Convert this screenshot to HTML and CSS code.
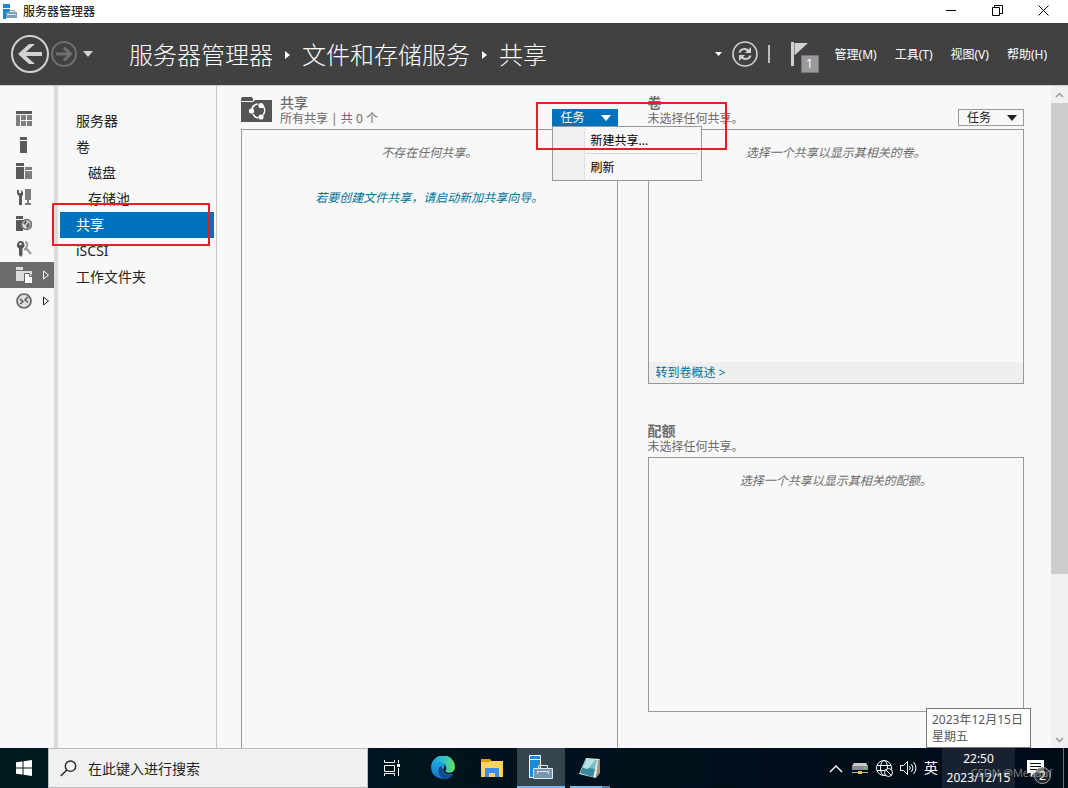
FILE: index.html
```html
<!DOCTYPE html>
<html lang="zh-CN">
<head>
<meta charset="utf-8">
<meta name="viewport" content="width=device-width, initial-scale=1">
<title>服务器管理器</title>
<link rel="stylesheet" href="styles.css">
</head>
<body>
<div class="desktop">
  <div class="titlebar">
    <svg class="app-icon" width="15" height="15" viewBox="0 0 15 15"><path fill="#1b87d3" d="M0 0h7v4H0zM0 5h7v2L3 10v5H0z"/><path fill="#7d9fb8" d="M3 8h11v6H3z"/><path stroke="#7d9fb8" fill="none" d="M6.500 8V6.500h5V8"/><path stroke="#dce9f2" fill="none" d="M4 10.500h9"/></svg>
    <span class="window-title">服务器管理器</span>
    <div class="window-controls">
      <button class="window-button" aria-label="最小化"><svg width="11" height="11"><path stroke="#000" d="M0 5.500h10"/></svg></button>
      <button class="window-button" aria-label="还原"><svg width="11" height="11" fill="none" stroke="#000"><path d="M.5 2.500h7v8h-7zM2.500 2.500v-2h8v8h-3"/></svg></button>
      <button class="window-button" aria-label="关闭"><svg width="11" height="11" stroke="#000"><path d="M.5.500l10 10M10.500.500l-10 10"/></svg></button>
    </div>
  </div>

  <header class="header">
    <div class="history">
      <button class="plain" aria-label="后退"><svg width="38" height="38" viewBox="0 0 38 38"><circle cx="19" cy="19" r="18" fill="none" stroke="#d2d2d2" stroke-width="2"/><path fill="#d2d2d2" d="M7 19 18 9h6l-9 8h16v4H15l9 8h-6z"/></svg></button>
      <button class="plain" aria-label="前进"><svg width="26" height="26" viewBox="0 0 26 26" fill="none" stroke="#6f6f6f"><circle cx="13" cy="13" r="12" stroke-width="2"/><path stroke-width="3" d="M5 13h14M13 6.500l6.500 6.500-6.500 6.500"/></svg></button>
      <button class="plain" aria-label="历史记录"><svg width="10" height="6"><path fill="#d2d2d2" d="M0 0h10L5 6z"/></svg></button>
    </div>
    <nav class="breadcrumb" aria-label="路径">
      <a href="#">服务器管理器</a>
      <svg width="5" height="8"><path fill="#fff" d="M0 0l5 4-5 4z"/></svg>
      <a href="#">文件和存储服务</a>
      <svg width="5" height="8"><path fill="#fff" d="M0 0l5 4-5 4z"/></svg>
      <a href="#">共享</a>
    </nav>
    <div class="header-tools">
      <button class="plain" aria-label="更多"><svg width="7" height="4"><path fill="#fff" d="M0 0h7L3.500 4z"/></svg></button>
      <button class="plain" aria-label="刷新"><svg width="26" height="26" viewBox="0 0 26 26" fill="none" stroke="#d2d2d2"><circle cx="13" cy="13" r="12" stroke-width="1.600"/><path stroke-width="2" d="M7.500 11.500c1-3.500 6-5 9-1.500M18.500 14.500c-1 3.500-6 5-9 1.500"/><path fill="#d2d2d2" stroke="none" d="M19 6v6h-6l2-2zM7 20v-6h6l-2 2z"/></svg></button>
      <span class="tool-divider"></span>
      <button class="plain flag" aria-label="通知"><svg width="18" height="25"><path fill="#d2d2d2" d="M0 0h3v24H0zM4 1h13L4 13z"/><path stroke="#8a8a8a" d="M3.500 1v12"/></svg><span class="flag-count">1</span></button>
    </div>
    <div class="menus">
      <button class="plain menu">管理(M)</button>
      <button class="plain menu">工具(T)</button>
      <button class="plain menu">视图(V)</button>
      <button class="plain menu">帮助(H)</button>
    </div>
  </header>

  <div class="main">
    <nav class="rail" aria-label="服务器角色">
      <a class="rail-item" href="#" aria-label="仪表板"><svg width="16" height="16"><path fill="#595959" d="M0 0h16v3H0z"/><path fill="#7d7d7d" d="M0 4h4v11H0zM5 4h5v5H5zM11 4h5v5h-5zM5 10h5v5H5zM11 10h5v5h-5z"/></svg></a>
      <a class="rail-item" href="#" aria-label="本地服务器"><svg width="16" height="16"><path fill="#595959" d="M4 0h7v3H4zM4 4h7v12H4z"/></svg></a>
      <a class="rail-item" href="#" aria-label="所有服务器"><svg width="16" height="16"><path fill="#595959" d="M0 0h8v3H0zM0 4h8v12H0z"/><path fill="#7d7d7d" d="M9 4h7v3H9zM9 8h7v8H9z"/></svg></a>
      <a class="rail-item" href="#" aria-label="服务工具"><svg width="16" height="16"><path fill="#595959" d="M1 1h2v3h2V1l2 2v3L6 7v9H3V7L1 5z"/><path fill="#7d7d7d" d="M9 0h6v11H9zM11 11h2v3h2v2H9v-2h2z"/></svg></a>
      <a class="rail-item" href="#" aria-label="网络服务"><svg width="16" height="16"><path fill="#595959" d="M0 1h7v3H0zM0 5h7v11H0z"/><circle cx="10.500" cy="9.500" r="5" fill="#ddd" stroke="#6b6b6b" stroke-width="1.500"/><path fill="#666" d="M7 8l3-3 1 2-2 3zM10 10l3-3 1 4-3 3z"/></svg></a>
      <a class="rail-item" href="#" aria-label="证书服务"><svg width="16" height="16"><path fill="#595959" fill-rule="evenodd" d="M4.500 0a4 4 0 0 1 2 7.500V14L5 16l-2-2V7.500A4 4 0 0 1 4.500 0zm-1 2v2h2V2z"/><path stroke="#999" stroke-width="2" fill="none" d="M9 1q3 0 2 4l-1 2 5 6M8 8l4 1"/></svg></a>
      <a class="rail-item rail-current" href="#" aria-label="文件和存储服务"><svg width="17" height="17"><path fill="#ddd" d="M0 0h7v3H0zM0 4h16v10H0z"/><path fill="#fff" stroke="#666" d="M8.500 6.500h5l3 3v7h-8z"/><path fill="none" stroke="#777" d="M13.500 6.500v3h3"/></svg><svg class="rail-arrow" width="7" height="10"><path fill="none" stroke="#fff" d="M.5 1l5 4-5 4z"/></svg></a>
      <a class="rail-item" href="#" aria-label="远程桌面服务"><svg width="16" height="16"><circle cx="8" cy="8" r="7" fill="#ddd" stroke="#666" stroke-width="1.700"/><path stroke="#555" stroke-width="1.400" fill="none" d="M4 6l3 2.500L4 11M12 4L9 7l3 2.500"/></svg><svg class="rail-arrow" width="7" height="10"><path fill="none" stroke="#222" d="M.5 1l5 4-5 4z"/></svg></a>
    </nav>

    <nav class="sidebar" aria-label="文件和存储服务">
      <a class="nav-item" href="#">服务器</a>
      <a class="nav-item" href="#">卷</a>
      <a class="nav-item nav-sub" href="#">磁盘</a>
      <a class="nav-item nav-sub" href="#">存储池</a>
      <a class="nav-item nav-current" href="#">共享<span class="mark mark-nav"></span></a>
      <a class="nav-item" href="#">iSCSI</a>
      <a class="nav-item" href="#">工作文件夹</a>
    </nav>

    <main class="content">
      <section class="tile">
        <div class="tile-head">
          <svg class="tile-icon" width="31" height="25"><path fill="#555" d="M1 0h10l1 2v2H0V2zM0 5h12l2-2h17v22H0z"/><g fill="none" stroke="#fff" stroke-width="1.600"><path d="M11 12a7 7 0 0 1 6-5M22 9a7 7 0 0 1 0 9M17 21a7 7 0 0 1-5-4"/></g><g fill="#fff"><circle cx="20" cy="8.500" r="2.600"/><circle cx="10.500" cy="14" r="2.600"/><circle cx="20" cy="20" r="2.600"/></g></svg>
          <div class="tile-text">
            <h2 class="tile-title tile-title-light">共享</h2>
            <p class="tile-subtitle">所有共享 | 共 0 个</p>
          </div>
          <div class="tasks">
            <button class="task-button task-open" aria-expanded="true">任务<svg width="10" height="6"><path fill="#fff" d="M0 0h10L5 6z"/></svg></button>
            <div class="task-menu">
              <button class="task-item">新建共享...</button>
              <button class="task-item task-item-split">刷新</button>
            </div>
            <span class="mark mark-task"></span>
          </div>
        </div>
        <div class="box box-open">
          <p class="empty">不存在任何共享。</p>
          <a class="empty empty-link" href="#">若要创建文件共享，请启动新加共享向导。</a>
        </div>
      </section>

      <div class="column">
        <section class="tile">
          <div class="tile-head">
            <div class="tile-text">
              <h2 class="tile-title">卷</h2>
              <p class="tile-subtitle">未选择任何共享。</p>
            </div>
            <div class="tasks">
              <button class="task-button">任务<svg width="10" height="6"><path fill="#222" d="M0 0h10L5 6z"/></svg></button>
            </div>
          </div>
          <div class="box">
            <p class="empty">选择一个共享以显示其相关的卷。</p>
            <div class="box-foot"><a href="#">转到卷概述 &gt;</a></div>
          </div>
        </section>
        <section class="tile">
          <div class="tile-head">
            <div class="tile-text">
              <h2 class="tile-title">配额</h2>
              <p class="tile-subtitle">未选择任何共享。</p>
            </div>
          </div>
          <div class="box">
            <p class="empty">选择一个共享以显示其相关的配额。</p>
          </div>
        </section>
      </div>
    </main>

    <div class="scrollbar" aria-hidden="true">
      <span class="scroll-arrow"><svg width="9" height="6"><path fill="none" stroke="#999" stroke-width="1.500" d="M1 5l3.500-3.500L8 5"/></svg></span>
      <div class="scroll-track"><div class="scroll-thumb"></div></div>
      <span class="scroll-arrow"><svg width="9" height="6"><path fill="none" stroke="#999" stroke-width="1.500" d="M1 1l3.500 3.500L8 1"/></svg></span>
    </div>
  </div>

  <footer class="taskbar">
    <button class="task-app" aria-label="开始"><svg width="16" height="16"><path fill="#fff" d="M0 2.300l6.500-.9v6.100H0zM7.500 1.200L16 0v7.500H7.500zM0 8.500h6.500v6.100L0 13.700zM7.500 8.500H16V16l-8.500-1.200z"/></svg></button>
    <label class="search">
      <svg width="17" height="17" fill="none" stroke="#222" stroke-width="1.400"><circle cx="10.500" cy="6.200" r="5.200"/><path d="M6.800 10L.8 16"/></svg>
      <input class="search-input" type="text" placeholder="在此键入进行搜索" aria-label="搜索">
    </label>
    <div class="apps">
      <button class="task-app" aria-label="任务视图"><svg width="17" height="16" fill="none" stroke="#fff"><path d="M.5 0v2.500h10V0M.5 5.500h10v6H.5zM.5 16v-2.500h10V16M14.500 0v3M14.500 8v8"/><path fill="#fff" stroke="none" d="M13 4h3v3h-3z"/></svg></button>
      <button class="task-app" aria-label="Microsoft Edge"><svg width="24" height="24" viewBox="0 0 24 24"><defs><linearGradient id="e1" x2="1"><stop stop-color="#1b9de2"/><stop offset=".6" stop-color="#32c5c0"/><stop offset="1" stop-color="#6be057"/></linearGradient><linearGradient id="e2" y2="1" x2="0"><stop stop-color="#1ba6e4"/><stop offset="1" stop-color="#1672c8"/></linearGradient></defs><path fill="url(#e2)" d="M0 12C1 6 6 5 10 6.500c4 1.500 4 4 3 5.500-2 3 0 7 8.500 6A12 12 0 0 1 0 12z"/><path fill="#114a8b" d="M9.500 10c-4 3-2 12 4.500 13.500 4 0 7-3 8.500-6-4 2.500-12 1.500-10.500-4z"/><path fill="url(#e1)" d="M0 11.500A12 12 0 0 1 24 11c0 5-4.500 6.500-8 5.500-2-.6-2-1.500-1.200-2.500 1.600-2.500-.8-7.500-6.800-7.500-4 0-7 2.500-8 5z"/></svg></button>
      <button class="task-app" aria-label="文件资源管理器"><svg width="22" height="18"><path fill="#e0a000" d="M0 0h9l1.500 2H22v4H0z"/><path fill="#ffd45e" d="M0 3h8l2-1h12v16H0z"/><path fill="#3c8fdc" d="M4 10l1-1h12l1 1v8h-4v-4H8v4H4z"/></svg></button>
      <button class="task-app app-active" aria-label="服务器管理器"><svg width="24" height="25"><path fill="#168bdc" stroke="#fff" d="M.5.500h11v4H.5zM.5 4.500h11v18H.5z"/><path fill="#7796ad" stroke="#dce9f2" d="M4.500 13.500h19v10h-19z"/><path fill="none" stroke="#dce9f2" d="M9.500 13v-2.500h9V13M7.500 15.500l1 1h11l1-1M8.500 17v2M19.500 17v2"/></svg></button>
      <button class="task-app app-running" aria-label="记事本"><svg width="24" height="24"><path fill="#e8eced" d="M8 2l14 1-4 19L1 18z"/><path fill="#79bfc9" d="M8 3l11 1-4 17L2 17z"/><path fill="#338b9b" d="M5 11l12 2-2 8-13-4z"/><path fill="#b9e2e6" d="M9 3l8 1-7 9-5-1z"/><path fill="#a89276" d="M20 4l2-1v14l-4 5z"/></svg></button>
    </div>
    <div class="tray">
      <button class="tray-button" aria-label="显示隐藏的图标"><svg width="14" height="9"><path fill="none" stroke="#fff" stroke-width="1.400" d="M1 8l6-6 6 6"/></svg></button>
      <button class="tray-button" aria-label="磁盘"><svg width="16" height="13"><path fill="#ccc" d="M2 1h12l2 3H0z"/><path fill="#8c8c8c" d="M0 4h16v4H0z"/><path fill="#5bd15b" d="M12 5h2v2h-2z"/><path fill="#bbb" d="M0 10h16v1H0z"/><path fill="#e2c542" d="M6 9h4v3H6z"/></svg></button>
      <button class="tray-button" aria-label="网络"><svg width="17" height="17" fill="none" stroke="#fff"><circle cx="8" cy="8" r="7.500"/><ellipse cx="8" cy="8" rx="3.500" ry="7.500"/><path d="M1 5.500h14M1 10.500h8"/><circle cx="12.500" cy="12.500" r="4" fill="#000b14"/><path d="M9.800 9.800l5.400 5.400"/></svg></button>
      <button class="tray-button" aria-label="音量"><svg width="17" height="14" fill="none" stroke="#fff"><path d="M.5 4.500h3l4-4v13l-4-4h-3zM9.500 5q1.500 2 0 4M11.500 3q3 4 0 8M13.500 1q5 6 0 12"/></svg></button>
      <button class="tray-button ime" aria-label="输入法">英</button>
      <button class="clock"><span>22:50</span><span>2023/12/15</span><span class="clock-tip"><span>2023年12月15日</span><span>星期五</span></span></button>
      <button class="notify" aria-label="操作中心"><svg width="17" height="17"><path fill="#fff" d="M0 0h17v13H7l-3 4v-4H0z"/><path stroke="#000b14" d="M3 3.500h11M3 6.500h11M3 9.500h8"/></svg><span class="notify-count">2</span></button>
      <span class="show-desktop"></span>
      <span class="watermark">CSDN @Meaauf</span>
    </div>
  </footer>
</div>
</body>
</html>
```
FILE: styles.css
```css
* {
  box-sizing: border-box;
}

body {
  margin: 0;
  font-family: "Noto Sans", "Noto Sans CJK SC", sans-serif;
  font-size: 12px;
  line-height: 16px;
  color: #222;
}

button {
  font: inherit;
  color: inherit;
  background: none;
  border: 0;
  padding: 0;
}

a {
  color: inherit;
  text-decoration: none;
}

p,
h2 {
  margin: 0;
}

svg {
  display: block;
  flex: none;
}

.desktop {
  display: flex;
  flex-direction: column;
  height: 100vh;
  overflow: hidden;
  background: #f8f8f8;
}

/* Window frame */
.titlebar {
  display: flex;
  align-items: center;
  height: 23px;
  padding-left: 3px;
  background: #fff;
  color: #000;
}

.window-title {
  margin-left: 5px;
}

.window-controls {
  display: flex;
  margin-left: auto;
  margin-bottom: 3px;
  padding-right: 2px;
}

.window-button {
  display: grid;
  place-items: center;
  width: 46px;
  height: 20px;
}

/* Dark header */
.header {
  display: flex;
  align-items: center;
  height: 62px;
  padding: 0 21px 0 11px;
  background: #414141;
  color: #fff;
}

.history {
  display: flex;
  align-items: center;
  gap: 2px;
}

.history .plain:last-child {
  padding-left: 4px;
}

.breadcrumb {
  display: flex;
  align-items: center;
  gap: 12px;
  margin-left: 36px;
  padding-top: 2px;
  font-size: 24px;
  font-weight: 300;
  line-height: 32px;
  white-space: nowrap;
}

.header-tools {
  display: flex;
  align-items: center;
  gap: 10px;
  margin-left: auto;
}

.tool-divider {
  width: 2px;
  height: 18px;
  background: #bdbdbd;
}

.flag {
  position: relative;
  width: 28px;
  height: 30px;
  margin-left: 11px;
}

.flag-count {
  position: absolute;
  right: 0;
  bottom: -4px;
  width: 18px;
  height: 18px;
  border: 1px solid #777;
  background: #9b999c;
  font-size: 12px;
  line-height: 16px;
  text-align: center;
}

.menus {
  display: flex;
  gap: 18px;
  margin-left: 16px;
  padding-top: 2px;
  white-space: nowrap;
}

/* Body */
.main {
  display: flex;
  flex: 1;
  min-height: 0;
  border-top: 1px solid #d0d0d0;
}

.rail {
  width: 58px;
  padding-top: 20px;
  border-right: 4px solid #dcdcdc;
}

.rail-item {
  display: flex;
  align-items: center;
  gap: 10px;
  height: 26px;
  padding-left: 16px;
}

.rail-current {
  background: #6b6b6b;
}

.rail-arrow {
  margin-left: auto;
  margin-right: 4px;
}

.sidebar {
  width: 159px;
  padding: 22px 2px 0;
  border-right: 1px solid #c4c4c4;
  font-size: 14px;
  line-height: 26px;
}

.nav-item {
  display: block;
  height: 26px;
  padding-left: 16px;
}

.nav-sub {
  padding-left: 28px;
}

.nav-current {
  position: relative;
  background: #0072bc;
  color: #fff;
}

.mark {
  position: absolute;
  z-index: 3;
  border: 2px solid #ed1c24;
  pointer-events: none;
}

.mark-nav {
  left: -8px;
  top: -9px;
  width: 158px;
  height: 43px;
}

.mark-task {
  left: -16px;
  top: -7px;
  width: 191px;
  height: 48px;
}

.content {
  display: grid;
  grid-template-columns: 1fr 1fr;
  gap: 30px;
  flex: 1;
  min-width: 0;
  min-height: 0;
  padding: 8px 27px 0 24px;
  color: #6b6b6b;
}

.column {
  display: flex;
  flex-direction: column;
  gap: 38px;
}

.tile {
  display: flex;
  flex-direction: column;
}

.tile-head {
  display: flex;
  height: 35px;
}

.tile-icon {
  margin: 3px 8px 0 0;
}

.tile-title {
  font-size: 14px;
  font-weight: 700;
  line-height: 17px;
}

.tile-title-light {
  font-weight: 500;
}

.tasks {
  position: relative;
  align-self: flex-end;
  margin: 0 0 3px auto;
}

.task-button {
  display: flex;
  align-items: center;
  justify-content: space-between;
  width: 66px;
  height: 17px;
  padding: 0 6px 0 8px;
  border: 1px solid #999;
  color: #222;
}

.task-open {
  border-color: #0072bc;
  background: #0072bc;
  color: #fff;
}

.task-menu {
  position: absolute;
  z-index: 2;
  left: 0;
  top: 17px;
  width: 150px;
  padding: 1px 3px 0;
  border: 1px solid #999;
  background: linear-gradient(90deg, #f0f0f0 31px, #e0e0e0 31px, #e0e0e0 32px, #f7f7f7 32px);
  color: #000;
}

.task-item {
  display: block;
  width: 100%;
  height: 25px;
  padding-left: 35px;
  text-align: left;
}

.task-item-split {
  height: 27px;
  padding-top: 2px;
  background: linear-gradient(#d5d5d5, #d5d5d5) right top / 112px 1px no-repeat;
}

.box {
  display: flex;
  flex-direction: column;
  align-items: center;
  min-height: 255px;
  padding-top: 15px;
  border: 1px solid #999;
}

.box-open {
  flex: 1;
  border-bottom: 0;
}

.empty {
  font-style: italic;
}

.empty-link {
  margin-top: 29px;
  color: #007299;
}

.box-foot {
  align-self: stretch;
  margin-top: auto;
  padding: 3px 7px 2px;
  background: #efefef;
  color: #007299;
}

.scrollbar {
  display: flex;
  flex-direction: column;
  width: 17px;
  background: #f0f0f0;
}

.scroll-arrow {
  display: grid;
  place-items: center;
  height: 17px;
}

.scroll-track {
  flex: 1;
}

.scroll-thumb {
  height: 75%;
  background: #cdcdcd;
}

/* Taskbar */
.taskbar {
  display: flex;
  height: 40px;
  background: linear-gradient(90deg, #001a22, #000b18);
  color: #fff;
}

.task-app {
  display: grid;
  place-items: center;
  width: 48px;
  height: 40px;
}

.search {
  display: flex;
  align-items: center;
  gap: 11px;
  width: 320px;
  padding-left: 11px;
  border: 1px solid #bbb;
  background: #f1f1f1;
}

.search-input {
  flex: 1;
  min-width: 0;
  padding: 2px 0 0;
  border: 0;
  outline: 0;
  background: none;
  font: inherit;
  font-size: 14px;
}

.search-input::placeholder {
  color: #222;
  opacity: 1;
}

.apps {
  display: flex;
  gap: 1px;
}

.apps .task-app:first-child {
  margin-right: 2px;
}

.app-active {
  border-bottom: 2px solid #76b9ed;
  background: #33454f;
}

.app-running {
  background: linear-gradient(90deg, #76b9ed 32px, #4f7fa6 32px) center bottom / 40px 2px no-repeat;
}

.tray {
  position: relative;
  display: flex;
  align-items: stretch;
  margin-left: auto;
}

.tray-button {
  display: grid;
  place-items: center;
  width: 24px;
}

.ime {
  width: 22px;
  font-size: 14px;
}

.clock {
  position: relative;
  display: flex;
  flex-direction: column;
  align-items: center;
  justify-content: center;
  gap: 3px;
  width: 73px;
  background: #17212f;
}

.clock-tip {
  position: absolute;
  z-index: 4;
  right: -16px;
  bottom: 40px;
  display: flex;
  flex-direction: column;
  gap: 1px;
  width: 105px;
  padding: 3px 0 2px 5px;
  border: 1px solid #767676;
  background: #fff;
  color: #575757;
  text-align: left;
  white-space: nowrap;
}

.notify {
  position: relative;
  display: grid;
  place-items: center;
  width: 48px;
  padding-right: 8px;
}

.notify-count {
  position: absolute;
  right: 12px;
  bottom: 4px;
  width: 17px;
  height: 17px;
  border: 1px solid #aaa;
  border-radius: 50%;
  background: #333a;
  line-height: 15px;
}

.show-desktop {
  width: 5px;
  border-left: 1px solid #6a737b;
}

.watermark {
  position: absolute;
  right: 16px;
  bottom: 7px;
  color: #c4c4c499;
  font-size: 11px;
  white-space: nowrap;
  pointer-events: none;
}
```
